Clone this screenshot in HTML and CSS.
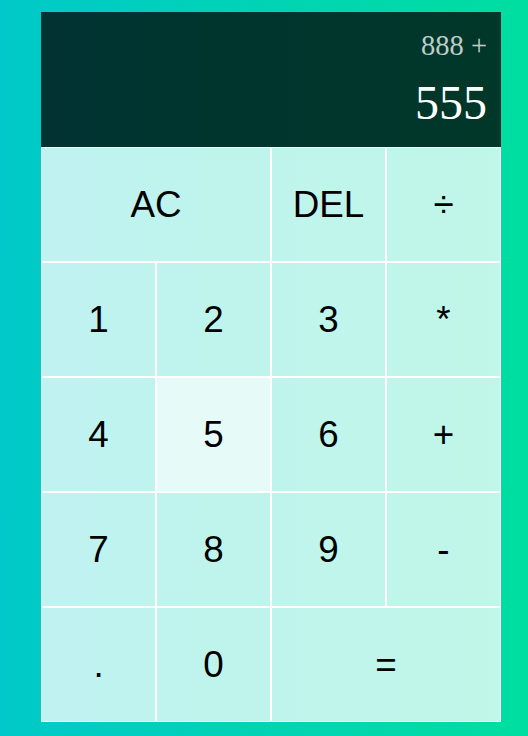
FILE: index.html
```html
<!DOCTYPE html>
<html lang="en">
<head>
<meta charset="utf-8">
<title>Calculator</title>
<link rel="stylesheet" href="styles.css">
</head>
<body>
<div class="calculator-grid">
  <div class="output">
    <div class="previous-operand">888 +</div>
    <div class="current-operand">555</div>
  </div>
  <button class="span-two">AC</button>
  <button>DEL</button>
  <button>÷</button>
  <button>1</button>
  <button>2</button>
  <button>3</button>
  <button>*</button>
  <button>4</button>
  <button class="hover">5</button>
  <button>6</button>
  <button>+</button>
  <button>7</button>
  <button>8</button>
  <button>9</button>
  <button>-</button>
  <button>.</button>
  <button>0</button>
  <button class="span-two">=</button>
</div>
</body>
</html>
```
FILE: styles.css
```css
*, *::before, *::after {
  box-sizing: border-box;
}

html, body {
  margin: 0;
  padding: 0;
  min-height: 100%;
}

body {
  min-height: 100vh;
  background: linear-gradient(to right, #00c9c9, #00dea0);
  padding: 12px 0 0 41px;
}

.calculator-grid {
  display: grid;
  grid-template-columns: repeat(4, 115px);
  grid-template-rows: 135px repeat(5, 115px);
  width: 460px;
}

.calculator-grid > button {
  cursor: pointer;
  font-family: "Liberation Sans", Arial, sans-serif;
  font-size: 36.8px;
  color: #000;
  border: 1px solid #fff;
  outline: none;
  margin: 0;
  padding: 0;
  background-color: rgba(255, 255, 255, 0.75);
}

.calculator-grid > button.hover {
  background-color: rgba(255, 255, 255, 0.9);
}

.span-two {
  grid-column: span 2;
}

.output {
  grid-column: 1 / -1;
  background-color: rgba(0, 0, 0, 0.75);
  display: flex;
  flex-direction: column;
  align-items: flex-end;
  justify-content: space-around;
  padding: 11px 14px 11px 11px;
  font-family: "Liberation Serif", "Times New Roman", serif;
  word-wrap: break-word;
  word-break: break-all;
}

.previous-operand {
  color: rgba(255, 255, 255, 0.75);
  font-size: 28.5px;
}

.current-operand {
  color: #fff;
  font-size: 48px;
}
```
